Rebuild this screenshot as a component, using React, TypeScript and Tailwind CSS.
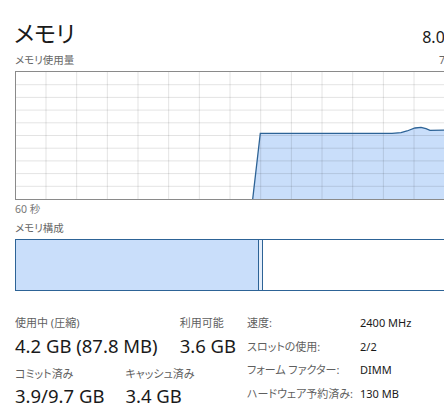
import React from "react";

const font = {
  fontFamily: '"Noto Sans", "Noto Sans CJK JP", sans-serif',
};

function Chart() {
  const W = 454;
  const H = 127;
  const vx: number[] = [];
  for (let x = 30; x < W; x += 30.67) vx.push(x);
  const hy: number[] = [];
  for (let k = 1; k < 10; k++) hy.push(k * 12.7);
  const pts = "236.7,127 244.3,61.3 376,61.3 385,60.6 391,59 399,56 405,55.3 410,56.6 414,58.3 454,58";
  return (
    <svg width={W} height={H} viewBox={`0 0 ${W} ${H}`} className="block">
      <polygon points={`${pts} 454,127`} fill="#c9defa" />
      {vx.map((x, i) => (
        <line key={"v" + i} x1={x} y1={0} x2={x} y2={H} stroke="rgba(0,0,0,0.11)" strokeWidth={1} />
      ))}
      {hy.map((y, i) => (
        <line key={"h" + i} x1={0} y1={y} x2={W} y2={y} stroke="rgba(0,0,0,0.11)" strokeWidth={1} />
      ))}
      <polyline points={pts} fill="none" stroke="#2d6396" strokeWidth={1.3} />
    </svg>
  );
}

export default function App() {
  return (
    <div
      className="w-[444px] h-[410px] overflow-hidden bg-white text-[#1a1a1a] [font-feature-settings:'palt']"
      style={font}
    >
      <div className="w-[486px] px-[15px]">
        <div className="flex justify-between items-start h-[51px] pt-[18px]">
          <div className="text-[23px] leading-[30px] -ml-[1px]">メモリ</div>
          <div className="text-[16px] leading-[20px] mt-[9px]">8.0 GB</div>
        </div>
        <div className="flex justify-between h-[20px] text-[10.5px] leading-[18px] text-[#666]">
          <span>メモリ使用量</span>
          <span>7.8 GB</span>
        </div>
        <div className="w-[456px] h-[129px] border border-[#8a8a8a]">
          <Chart />
        </div>
        <div className="h-[19px] text-[10.5px] leading-[19px] text-[#777]">60 秒</div>
        <div className="h-[20px] text-[10.5px] leading-[18px] text-[#666]">メモリ構成</div>
        <div className="flex w-[456px] h-[52px] border border-[#2d6396]">
          <div className="w-[243px] bg-[#c9defa] border-r border-[#2d6396]" />
          <div className="w-[4px] bg-[#e6effb] border-r border-[#2d6396]" />
          <div className="flex-1 bg-white" />
        </div>
        <div className="flex mt-[24px]">
          <div className="w-[232px] flex flex-col">
            <div className="flex gap-[22px]">
              <div className="flex flex-col">
                <span className="text-[11px] leading-[16px] text-[#5f5f5f]">使用中 (圧縮)</span>
                <span className="text-[18.5px] leading-[22px] mt-[4px]">4.2 GB (87.8 MB)</span>
              </div>
              <div className="flex flex-col">
                <span className="text-[11px] leading-[16px] text-[#5f5f5f]">利用可能</span>
                <span className="text-[18.5px] leading-[22px] mt-[4px]">3.6 GB</span>
              </div>
            </div>
            <div className="flex gap-[21px] mt-[9px]">
              <div className="flex flex-col">
                <span className="text-[11px] leading-[16px] text-[#5f5f5f]">コミット済み</span>
                <span className="text-[18.5px] leading-[24px] mt-[2px]">3.9/9.7 GB</span>
              </div>
              <div className="flex flex-col">
                <span className="text-[11px] leading-[16px] text-[#5f5f5f]">キャッシュ済み</span>
                <span className="text-[18.5px] leading-[24px] mt-[2px]">3.4 GB</span>
              </div>
            </div>
          </div>
          <div className="grid grid-cols-[113px_auto] text-[11px] leading-[18.3px] -mt-[1px]">
            <span className="text-[#5f5f5f]">速度:</span>
            <span>2400 MHz</span>
            <span className="text-[#5f5f5f]">スロットの使用:</span>
            <span>2/2</span>
            <span className="text-[#5f5f5f]">フォーム ファクター:</span>
            <span>DIMM</span>
            <span className="text-[#5f5f5f]">ハードウェア予約済み:</span>
            <span>130 MB</span>
          </div>
        </div>
      </div>
    </div>
  );
}
